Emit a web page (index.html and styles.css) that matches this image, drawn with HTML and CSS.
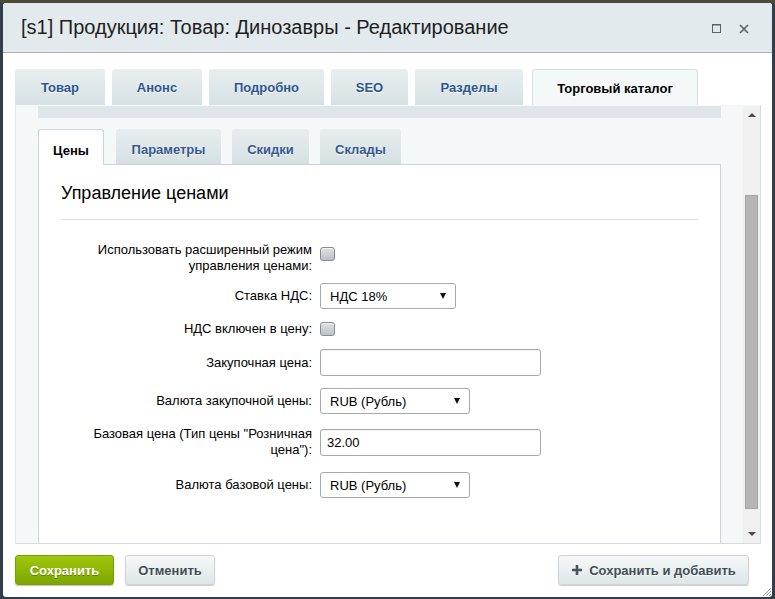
FILE: index.html
```html
<!DOCTYPE html>
<html lang="ru">
<head>
<meta charset="utf-8">
<title>Редактирование</title>
<link rel="stylesheet" href="styles.css">
</head>
<body>
<div class="window">
  <div class="titlebar">
    <span class="title">[s1] Продукция: Товар: Динозавры - Редактирование</span>
    <div class="win-controls">
      <svg class="ico-max" width="9" height="9" viewBox="0 0 9 9"><rect x="0.5" y="0.5" width="8" height="8" fill="none" stroke="#5b6266" stroke-width="1"/><line x1="0" y1="1" x2="9" y2="1" stroke="#5b6266" stroke-width="1"/></svg>
      <svg class="ico-close" width="10" height="10" viewBox="0 0 10 10"><path d="M1 1 L9 9 M9 1 L1 9" stroke="#5b6266" stroke-width="1.6" fill="none"/></svg>
    </div>
  </div>

  <div class="content">
    <div class="tabs">
      <div class="tab tab-1">Товар</div>
      <div class="tab tab-2">Анонс</div>
      <div class="tab tab-3">Подробно</div>
      <div class="tab tab-4">SEO</div>
      <div class="tab tab-5">Разделы</div>
      <div class="tab tab-6 active">Торговый каталог</div>
    </div>

    <div class="panel">
      <div class="panel-scroll">
        <div class="cut-bar"></div>
        <div class="subtabs">
          <div class="subtab sub-1 active">Цены</div>
          <div class="subtab sub-2">Параметры</div>
          <div class="subtab sub-3">Скидки</div>
          <div class="subtab sub-4">Склады</div>
        </div>
        <div class="subpanel">
          <h2 class="heading">Управление ценами</h2>
          <div class="form">
            <div class="row row-top">
              <div class="label">Использовать расширенный режим управления ценами:</div>
              <div class="field"><span class="checkbox"></span></div>
            </div>
            <div class="row">
              <div class="label">Ставка НДС:</div>
              <div class="field"><div class="select select-sm"><span>НДС 18%</span><i class="arrow"></i></div></div>
            </div>
            <div class="row">
              <div class="label">НДС включен в цену:</div>
              <div class="field"><span class="checkbox"></span></div>
            </div>
            <div class="row">
              <div class="label">Закупочная цена:</div>
              <div class="field"><div class="input"></div></div>
            </div>
            <div class="row">
              <div class="label">Валюта закупочной цены:</div>
              <div class="field"><div class="select select-md"><span>RUB (Рубль)</span><i class="arrow"></i></div></div>
            </div>
            <div class="row row-tall">
              <div class="label">Базовая цена (Тип цены "Розничная цена"):</div>
              <div class="field"><div class="input">32.00</div></div>
            </div>
            <div class="row">
              <div class="label">Валюта базовой цены:</div>
              <div class="field"><div class="select select-md"><span>RUB (Рубль)</span><i class="arrow"></i></div></div>
            </div>
          </div>
        </div>
      </div>
      <div class="scrollbar">
        <i class="sb-up"></i>
        <div class="sb-track"><div class="sb-thumb"></div></div>
        <i class="sb-down"></i>
      </div>
    </div>
  </div>

  <div class="footer">
    <button class="btn btn-save">Сохранить</button>
    <button class="btn btn-cancel">Отменить</button>
    <div class="spacer"></div>
    <button class="btn btn-add"><svg width="12" height="12" viewBox="0 0 12 12"><path d="M6 1 V11 M1 6 H11" stroke="#4a545c" stroke-width="2.6" fill="none"/></svg>Сохранить и добавить</button>
  </div>

  <svg class="grip" width="12" height="12" viewBox="0 0 12 12"><path d="M11 3 L3 11 M11 6 L6 11 M11 9 L9 11" stroke="#9aa0a4" stroke-width="1" fill="none"/></svg>
</div>
</body>
</html>
```

FILE: styles.css
```css
* { box-sizing: border-box; }
html, body { margin: 0; padding: 0; }
body {
  width: 775px;
  height: 599px;
  overflow: hidden;
  background: linear-gradient(#4b4939 0, #4b4939 3px, #333d47 3px);
  font-family: "Liberation Sans", Arial, sans-serif;
  font-size: 13px;
  color: #000;
}
.window {
  position: relative;
  margin: 3px 3px 0 3px;
  width: 769px;
  height: 594px;
  background: #fff;
  border-radius: 3px;
  display: flex;
  flex-direction: column;
  overflow: hidden;
}
.titlebar {
  height: 50px;
  flex: none;
  background: #e3eaed;
  border-bottom: 1px solid #a9b0b4;
  display: flex;
  align-items: center;
  padding: 0 0 0 18px;
}
.title {
  font-size: 20px;
  color: #1e1e1e;
  flex: 1;
  margin-top: -1px;
}
.win-controls {
  display: flex;
  align-items: center;
  gap: 18px;
  padding-right: 23px;
  margin-top: 2px;
}
.ico-max { display: block; }
.ico-close { display: block; }

.content {
  flex: none;
  padding: 16px 11px 0 12px;
}
.tabs {
  display: flex;
  gap: 7px;
  height: 36px;
}
.tab {
  height: 36px;
  display: flex;
  align-items: center;
  justify-content: center;
  font-weight: bold;
  font-size: 13px;
  color: #2d568c;
  text-shadow: 0 1px 0 #fff;
  background: linear-gradient(#e8eef0, #d7e1e4);
  border-radius: 3px 3px 0 0;
  padding-top: 1px;
}
.tab-1 { width: 90px; }
.tab-2 { width: 90px; }
.tab-3 { width: 115px; }
.tab-4 { width: 77px; }
.tab-5 { width: 108px; }
.tab-6 { width: 166px; margin-left: 2px; }
.tab.active {
  background: #f5f8f9;
  color: #000;
  border: 1px solid #d6dfe3;
  border-bottom: none;
  position: relative;
}

.panel {
  height: 439px;
  display: flex;
  background: #f5f8f9;
  border-left: 1px solid #e2e8eb;
  border-right: 1px solid #d3dde1;
  border-bottom: 1px solid #d3dde1;
}
.panel-scroll {
  flex: 1;
  display: flex;
  flex-direction: column;
  padding: 1px 22px 0 22px;
  overflow: hidden;
}
.cut-bar {
  height: 12px;
  flex: none;
  background: #dfe6e9;
}
.subtabs {
  flex: none;
  display: flex;
  align-items: flex-end;
  gap: 11px;
  height: 35px;
  margin-top: 11px;
}
.subtab {
  height: 35px;
  display: flex;
  align-items: center;
  justify-content: center;
  font-weight: bold;
  color: #35588f;
  text-shadow: 0 1px 0 #fff;
  background: linear-gradient(#e7edef, #d6e0e3);
  border-radius: 3px 3px 0 0;
  padding-top: 5px;
}
.sub-1 { width: 66px; margin-right: 1px; }
.sub-2 { width: 105px; }
.sub-3 { width: 77px; }
.sub-4 { width: 81px; }
.subtab.active {
  height: 36px;
  margin-bottom: -1px;
  background: #fff;
  color: #000;
  border: 1px solid #cbd6da;
  border-bottom: none;
  position: relative;
  z-index: 1;
}
.subpanel {
  flex: 1;
  background: #fff;
  border: 1px solid #cbd6da;
  border-bottom: none;
  padding: 17px 22px 0 22px;
}
.heading {
  margin: 0;
  font-size: 18px;
  line-height: 22px;
  font-weight: normal;
  color: #000;
  padding-bottom: 15px;
  border-bottom: 1px solid #dcdfe0;
}
.form {
  margin-top: 22px;
  display: flex;
  flex-direction: column;
  gap: 12px;
}
.row {
  display: grid;
  grid-template-columns: 251px 1fr;
  column-gap: 8px;
  align-items: center;
}
.row-top { align-items: start; margin-bottom: -3px; }
.row-top .field { padding-top: 5px; }
.row-tall { margin-bottom: 2px; }
.label {
  text-align: right;
  line-height: 16px;
  color: #000;
}
.field { display: flex; }
.checkbox {
  display: block;
  width: 15px;
  height: 14px;
  border: 1px solid #858b90;
  border-radius: 3px;
  background: linear-gradient(#dfe2e4, #bcc1c5);
  box-shadow: inset 0 1px 0 #f0f2f3;
}
.select {
  height: 26px;
  border: 1px solid #a6a9ab;
  border-radius: 3px;
  background: #fff;
  display: flex;
  align-items: center;
  padding: 0 0 0 9px;
  position: relative;
  font-size: 13px;
}
.select span { flex: 1; padding-top: 1px; }
.select-sm { width: 136px; }
.select-md { width: 150px; }
.arrow {
  display: block;
  width: 0;
  height: 0;
  border-left: 3.5px solid transparent;
  border-right: 3.5px solid transparent;
  border-top: 6px solid #111;
  margin-right: 9px;
}
.input {
  width: 221px;
  height: 27px;
  border: 1px solid #a6a9ab;
  border-radius: 3px;
  background: #fff;
  box-shadow: inset 0 1px 1px rgba(0,0,0,0.06);
  padding: 0 0 0 6px;
  display: flex;
  align-items: center;
  font-size: 13px;
}

.scrollbar {
  width: 17px;
  flex: none;
  margin-top: 1px;
  background: #f0f0f0;
  display: flex;
  flex-direction: column;
  align-items: center;
}
.sb-up, .sb-down {
  display: block;
  width: 0;
  height: 0;
  border-left: 4px solid transparent;
  border-right: 4px solid transparent;
}
.sb-up {
  border-bottom: 4px solid #4a4a4a;
  margin: 7px 0 0 0;
}
.sb-track {
  flex: 1;
  width: 100%;
  padding: 78px 2px 0 2px;
}
.sb-thumb {
  height: 314px;
  background: #b6b6b6;
  border: 1px solid #a4a4a4;
}
.sb-down {
  border-top: 4px solid #4a4a4a;
  margin: 0 0 7px 0;
}

.footer {
  flex: none;
  display: flex;
  align-items: flex-start;
  padding: 11px 23px 0 12px;
}
.spacer { flex: 1; }
.btn {
  height: 30px;
  border-radius: 3px;
  font-family: "Liberation Sans", Arial, sans-serif;
  font-size: 13px;
  font-weight: bold;
  padding: 0;
  display: flex;
  align-items: center;
  justify-content: center;
  cursor: pointer;
}
.btn-save {
  width: 99px;
  color: #fff;
  background: linear-gradient(#a0c80e, #7da600);
  border: 1px solid #7a9f05;
  box-shadow: 0 1px 1px rgba(0,0,0,0.25);
  text-shadow: 0 1px 0 rgba(0,0,0,0.3);
}
.btn-cancel, .btn-add {
  color: #434e57;
  background: linear-gradient(#f7f9f9, #dde5e8);
  border: 1px solid #cdd5d9;
  box-shadow: 0 1px 1px rgba(0,0,0,0.2);
  text-shadow: 0 1px 0 #fff;
}
.btn-cancel { width: 90px; margin-left: 11px; }
.btn-add { width: 191px; gap: 6px; }
.btn-add svg { display: block; }
.grip {
  position: absolute;
  right: 0;
  bottom: 0;
}
```
